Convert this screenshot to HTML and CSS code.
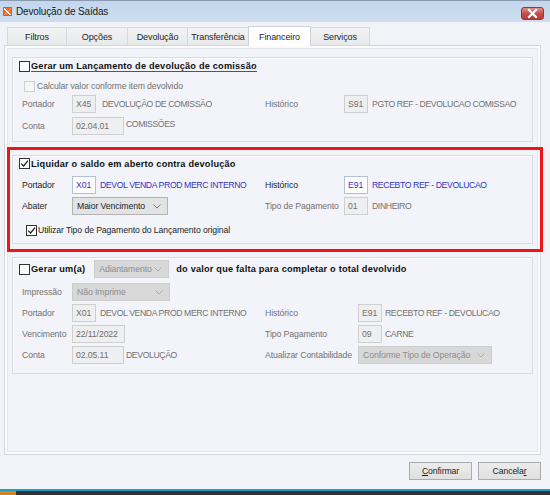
FILE: index.html
```html
<!DOCTYPE html>
<html lang="pt">
<head>
<meta charset="utf-8">
<title>Devolução de Saídas</title>
<link rel="stylesheet" href="styles.css">
</head>
<body>
<div class="window">
  <div class="titlebar">
    <span class="appicon"></span>
    <span class="title">Devolução de Saídas</span>
    <span class="close"><svg width="23" height="13" viewBox="0 0 23 13"><path d="M8 3 L15 10 M15 3 L8 10" stroke="#fff" stroke-width="2.2" stroke-linecap="square"/></svg></span>
  </div>

  <div class="tabs">
    <div class="tab t1">Filtros</div>
    <div class="tab t2">Opções</div>
    <div class="tab t3">Devolução</div>
    <div class="tab t4">Transferência</div>
    <div class="tab t5 active">Financeiro</div>
    <div class="tab t6">Serviços</div>
  </div>

  <div class="panel">
    <!-- Group 1 -->
    <div class="group g1">
      <div class="row head h17">
        <span class="chk"></span>
        <span class="htext focus">Gerar um Lançamento de devolução de comissão</span>
      </div>
      <div class="row mt2">
        <span class="chk dis ind2"></span>
        <span class="gray">Calcular valor conforme item devolvido</span>
      </div>
      <div class="row">
        <div class="left">
          <span class="lbl gray">Portador</span>
          <span class="inp dis w24">X45</span>
          <span class="desc gray ml6">DEVOLUÇÃO DE COMISSÃO</span>
        </div>
        <span class="rlbl gray">Histórico</span>
        <span class="inp dis w24">S91</span>
        <span class="desc gray ml4">PGTO REF - DEVOLUCAO COMISSAO</span>
      </div>
      <div class="row mt4">
        <div class="left">
          <span class="lbl gray">Conta</span>
          <span class="inp dis w52">02.04.01</span>
          <span class="desc gray ml2 up2">COMISSÕES</span>
        </div>
      </div>
    </div>

    <!-- Group 2 (highlighted) -->
    <div class="highlight">
      <div class="group g2">
        <div class="row head h15">
          <span class="chk on"><svg width="9" height="9" viewBox="0 0 9 9"><path d="M1.2 4.6 L3.6 7 L8 1.6" fill="none" stroke="#222" stroke-width="1.3"/></svg></span>
          <span class="htext">Liquidar o saldo em aberto contra devolução</span>
        </div>
        <div class="row mt5">
          <div class="left">
            <span class="lbl">Portador</span>
            <span class="inp en w24 blue">X01</span>
            <span class="desc blue ml4">DEVOL VENDA PROD MERC INTERNO</span>
          </div>
          <span class="rlbl">Histórico</span>
          <span class="inp en w24 blue">E91</span>
          <span class="desc blue ml4">RECEBTO REF - DEVOLUCAO</span>
        </div>
        <div class="row mt3">
          <div class="left">
            <span class="lbl">Abater</span>
            <span class="sel en w96">Maior Vencimento<svg class="chev" width="8" height="5" viewBox="0 0 8 5"><path d="M0.5 0.5 L4 4 L7.5 0.5" fill="none" stroke="#777" stroke-width="1"/></svg></span>
          </div>
          <span class="rlbl gray">Tipo de Pagamento</span>
          <span class="inp dis w24">01</span>
          <span class="desc gray ml4">DINHEIRO</span>
        </div>
        <div class="row mt6">
          <span class="chk on ind4"><svg width="9" height="9" viewBox="0 0 9 9"><path d="M1.2 4.6 L3.6 7 L8 1.6" fill="none" stroke="#222" stroke-width="1.3"/></svg></span>
          <span>Utilizar Tipo de Pagamento do Lançamento original</span>
        </div>
      </div>
    </div>

    <!-- Group 3 -->
    <div class="group g3">
      <div class="row mt2 head">
        <span class="chk"></span>
        <span class="htext">Gerar um(a)</span>
        <span class="sel dis w75 ml9">Adiantamento<svg class="chev" width="8" height="5" viewBox="0 0 8 5"><path d="M0.5 0.5 L4 4 L7.5 0.5" fill="none" stroke="#aaa" stroke-width="1"/></svg></span>
        <span class="htext ml7">do valor que falta para completar o total devolvido</span>
      </div>
      <div class="row mt5">
        <span class="lbl gray">Impressão</span>
        <span class="sel dis w98">Não Imprime<svg class="chev" width="8" height="5" viewBox="0 0 8 5"><path d="M0.5 0.5 L4 4 L7.5 0.5" fill="none" stroke="#aaa" stroke-width="1"/></svg></span>
      </div>
      <div class="row mt3">
        <div class="left">
          <span class="lbl gray">Portador</span>
          <span class="inp dis w24">X01</span>
          <span class="desc gray ml4">DEVOL VENDA PROD MERC INTERNO</span>
        </div>
        <span class="rlbl wide gray">Histórico</span>
        <span class="inp dis w24">E91</span>
        <span class="desc gray ml3">RECEBTO REF - DEVOLUCAO</span>
      </div>
      <div class="row mt3">
        <div class="left">
          <span class="lbl gray">Vencimento</span>
          <span class="inp dis w53">22/11/2022</span>
        </div>
        <span class="rlbl wide gray">Tipo Pagamento</span>
        <span class="inp dis w24">09</span>
        <span class="desc gray ml3">CARNE</span>
      </div>
      <div class="row mt3">
        <div class="left">
          <span class="lbl gray">Conta</span>
          <span class="inp dis w52">02.05.11</span>
          <span class="desc gray ml2">DEVOLUÇÃO</span>
        </div>
        <span class="rlbl wide gray">Atualizar Contabilidade</span>
        <span class="sel dis w134">Conforme Tipo de Operação<svg class="chev" width="8" height="5" viewBox="0 0 8 5"><path d="M0.5 0.5 L4 4 L7.5 0.5" fill="none" stroke="#aaa" stroke-width="1"/></svg></span>
      </div>
    </div>
  </div>

  <div class="buttons">
    <span class="btn"><u>C</u>onfirmar</span>
    <span class="btn">Cancela<u>r</u></span>
  </div>

  <div class="taskbar"><span class="orange"></span></div>
</div>
</body>
</html>
```

FILE: styles.css
```css
* { box-sizing: border-box; }
html, body { margin: 0; padding: 0; }
body {
  width: 550px;
  height: 495px;
  overflow: hidden;
  background: #f1f3f8;
  font-family: "Liberation Sans", Arial, sans-serif;
  font-size: 8.7px;
  letter-spacing: -0.1px;
  color: #1e1e1e;
}
.window { width: 550px; height: 495px; display: flex; flex-direction: column; }

/* Title bar */
.titlebar {
  height: 22px;
  flex: none;
  display: flex;
  align-items: center;
  border-top: 1px solid #8a9bb0;
  background: linear-gradient(to bottom, #c2d6ec, #cfdef0);
  position: relative;
}
.appicon {
  width: 9px; height: 9px;
  margin-left: 3px;
  background:
    linear-gradient(45deg, transparent 40%, #fff 40%, #fff 55%, transparent 55%),
    linear-gradient(-45deg, transparent 40%, #fff3 40%, #fff3 55%, transparent 55%),
    #f06a28;
  border: 1px solid #e05a18;
}
.title { margin-left: 4px; font-size: 10px; letter-spacing: -0.15px; color: #1a1a1a; }
.close {
  margin-left: auto;
  margin-right: 6px;
  margin-top: 3px;
  width: 23px; height: 13px;
  border-radius: 3px;
  border: 1px solid #8c3a36;
  background: linear-gradient(to bottom, #e0908a, #c75048 50%, #b93a33);
  display: flex;
}
.close svg { margin: -1px; }

/* Tabs */
.tabs {
  flex: none;
  height: 18px;
  margin-top: 5px;
  padding-left: 7px;
  display: flex;
  position: relative;
  z-index: 2;
  font-size: 9px;
}
.tab {
  height: 18px;
  border: 1px solid #d6d8dc;
  border-bottom: none;
  margin-right: -1px;
  background: linear-gradient(to bottom, #f2f2f2, #e8e9eb);
  display: flex;
  align-items: center;
  justify-content: center;
  color: #1e1e1e;
}
.t1 { width: 60px; }
.t2 { width: 62px; }
.t3 { width: 61px; }
.t4 { width: 62px; }
.t5 { width: 63px; }
.t6 { width: 60px; }
.tab.active {
  background: #fff;
  height: 20px;
  margin-top: -1px;
  border-color: #d0d2d6;
  position: relative;
  z-index: 3;
}

/* Panel */
.panel {
  flex: none;
  width: 537px;
  height: 410px;
  margin-left: 4px;
  border: 1px solid #d3d5da;
  box-shadow: inset 0 0 0 2px #fbfbfd, inset 0 0 0 3px #e4e6eb;
  background: #f2f4f9;
  padding: 11px 7px 0 7px;
  position: relative;
  z-index: 1;
}

.group {
  width: 521px;
  border: 1px solid #d9dce2;
  box-shadow: inset 1px 1px 0 #fdfdff;
  padding-left: 9px;
}
.g1 { padding-bottom: 6px; }
.g2 { padding-bottom: 4px; }
.g3 { padding-bottom: 9px; margin-top: 13px; }

.highlight { position: relative; margin-top: 13px; }
.highlight::after {
  content: "";
  position: absolute;
  left: -5px; right: -10px; top: -8px; bottom: -8px;
  border: 3px solid #ee1518;
  pointer-events: none;
}

.row { display: flex; align-items: center; height: 18px; white-space: nowrap; }
.row.h17 { height: 17px; }
.row.h15 { height: 15px; }
.mt2 { margin-top: 2px; }
.mt3 { margin-top: 3px; }
.mt4 { margin-top: 4px; }
.mt5 { margin-top: 5px; }
.mt6 { margin-top: 6px; }

.left { width: 243px; display: flex; align-items: center; flex: none; }
.lbl { width: 50px; flex: none; }
.rlbl { width: 79px; flex: none; }
.rlbl.wide { width: 93px; }

.desc { letter-spacing: -0.4px; }
.gray { color: #727272; }
.blue { color: #3434c4; }

.head { font-weight: bold; }
.htext { font-weight: bold; color: #111; font-size: 9.2px; letter-spacing: 0.2px; }
.focus { border-bottom: 1px solid #555; line-height: 10px; }

/* checkbox */
.chk {
  width: 11px; height: 11px;
  flex: none;
  border: 1px solid #333;
  background: #fff;
  margin-left: -3px;
  margin-right: 1px;
  display: flex; align-items: center; justify-content: center;
}
.chk.dis { border-color: #cfd1d5; background: #f7f7f7; }
.ind2 { margin-left: 2px; margin-right: 2px; }
.ind4 { margin-left: 4px; margin-right: 1px; }

/* inputs */
.inp {
  height: 18px;
  flex: none;
  display: flex;
  align-items: center;
  padding-left: 3px;
  border: 1px solid #cfcfcf;
}
.inp.dis { background: #eeeff1; color: #6f6f6f; }
.inp.en { background: #fff; border-color: #b4c0d4; }
.w24 { width: 24px; }
.w52 { width: 52px; }
.w53 { width: 53px; }

.sel {
  height: 18px;
  flex: none;
  display: flex;
  align-items: center;
  padding-left: 4px;
  border: 1px solid #c4c4c4;
  position: relative;
  font-weight: normal;
  letter-spacing: -0.1px;
}
.sel.en { background: #e3e3e3; border-color: #b3b3b3; color: #1e1e1e; }
.sel.dis { background: #d8d8d8; border-color: #cdcdcd; color: #8d8d8d; }
.chev { margin-left: auto; margin-right: 6px; flex: none; }
.w75 { width: 75px; }
.w96 { width: 96px; }
.w98 { width: 98px; }
.w134 { width: 134px; }

.ml2 { margin-left: 2px; }
.ml3 { margin-left: 3px; }
.ml4 { margin-left: 4px; }
.ml6 { margin-left: 6px; }
.ml7 { margin-left: 7px; }
.ml9 { margin-left: 9px; }
.up2 { position: relative; top: -2px; }

/* buttons */
.buttons {
  flex: none;
  height: 18px;
  margin-top: 7px;
  padding-right: 9px;
  display: flex;
  justify-content: flex-end;
  gap: 6px;
}
.btn {
  width: 63px; height: 18px;
  border: 1px solid #acacac;
  background: linear-gradient(to bottom, #ececec, #e0e0e0);
  display: flex; align-items: center; justify-content: center;
  color: #1e1e1e;
}

.taskbar {
  flex: none;
  margin-top: 9px;
  height: 6px;
  border-top: 2px solid #1f9fc0;
  background: #2e3136;
  display: flex;
}
.orange { width: 16px; height: 100%; background: #d9831f; }
```
